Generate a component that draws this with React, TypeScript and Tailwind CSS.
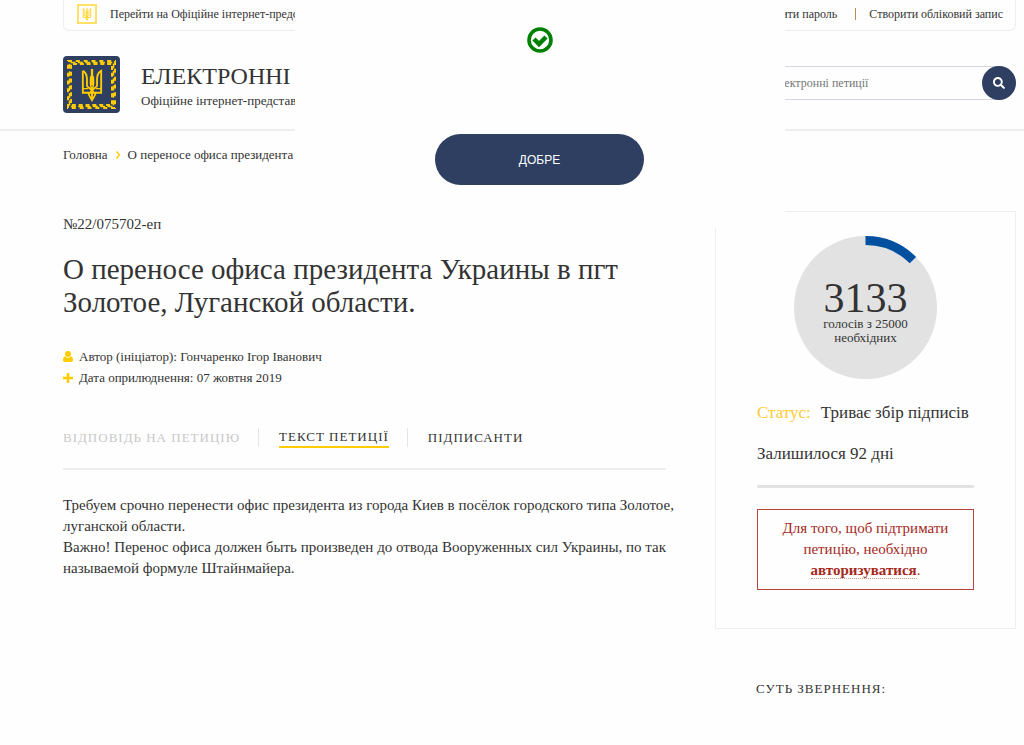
import { FaSearch } from "react-icons/fa"

function Trident({ className }: { className?: string }) {
  return (
    <svg viewBox="0 0 24 38" className={className} fill="none" stroke="currentColor" strokeWidth="2" aria-hidden="true">
      <path d="M2 4V28H22V4C18.500 6 17.500 9 17.500 13V20C17.500 22 15 22 13.500 24L9 29" />
      <path d="M2 4C5.500 6 6.500 9 6.500 13V20C6.500 22 9 22 10.500 24L15 29" />
      <path d="M12 2V20" strokeWidth="2.500" />
      <path d="M10.500 10C10.500 15 9 19 12 25C15 19 13.500 15 13.500 10M2 23.500H8M16 23.500H22" strokeWidth="1.500" />
      <path d="M8 28C8.500 32 10.500 33 12 36C13.500 33 15.500 32 16 28M12 25V34" />
    </svg>
  )
}

function Emblem() {
  return (
    <span className="relative grid h-[57px] w-[57px] shrink-0 place-items-center rounded bg-[#2f3f61] text-[#fc0]">
      <svg viewBox="0 0 57 57" className="absolute inset-0" fill="none" stroke="currentColor" aria-hidden="true">
        <rect x="5" y="5" width="47" height="47" strokeWidth="2" strokeDasharray="4 3.833" />
        <rect x="6.500" y="6.500" width="44" height="44" strokeWidth="1.500" strokeDasharray="5 2.333" strokeDashoffset="-1" />
        <rect x="8" y="8" width="41" height="41" strokeWidth="2" strokeDasharray="4 2.833" strokeDashoffset="-2" />
      </svg>
      <Trident className="h-[35px] w-[22px]" />
    </span>
  )
}

function TopBar() {
  return (
    <div className="flex h-[31px] items-center justify-between rounded-b-md border border-t-0 border-[#eee] pr-3 pb-[2px] pl-[13px] text-[12px]">
      <a href="#" className="flex items-center gap-[13px] whitespace-nowrap">
        <span className="grid h-5 w-5 place-items-center border-2 border-[#ffe066] text-[#fc0]">
          <Trident className="h-[14px] w-[10px]" />
        </span>
        Перейти на Офіційне інтернет-представництво
      </a>
      <div className="flex items-center whitespace-nowrap">
        <a href="#">Відновити пароль</a>
        <span className="mr-[13px] ml-[18px] h-3 w-px bg-[#b98a5a]" />
        <a href="#">Створити обліковий запис</a>
      </div>
    </div>
  )
}

function SearchForm() {
  return (
    <form className="flex h-[34px] w-[300px] items-center rounded-full border border-[#d5d6e0]">
      <input
        type="search"
        aria-label="Пошук"
        placeholder="Електронні петиції"
        className="h-full min-w-0 flex-1 bg-transparent pl-[54px] text-[12px] outline-none placeholder:text-[#777]"
      />
      <button
        type="button"
        aria-label="Шукати"
        className="-mr-px grid h-[34px] w-[34px] shrink-0 place-items-center rounded-full bg-[#2f3f61] text-white"
      >
        <FaSearch size={12} />
      </button>
    </form>
  )
}

function Dialog() {
  return (
    <div
      role="dialog"
      aria-label="Повідомлення"
      className="absolute top-0 left-1/2 flex h-[228px] w-[490px] -translate-x-1/2 flex-col items-center bg-[#fefefe] pt-[27px]"
    >
      <svg viewBox="0 0 26 26" className="h-[26px] w-[26px]" fill="none" stroke="#008000" aria-hidden="true">
        <circle cx="13" cy="13" r="11" strokeWidth="3.600" />
        <path d="M7 12L12 17L19 10" strokeWidth="4.500" />
      </svg>
      <button
        type="button"
        className="mt-[81px] h-[51px] w-[209px] rounded-full bg-[#2f3f61] font-['Liberation_Sans',sans-serif] text-[12px] text-white"
      >
        ДОБРЕ
      </button>
    </div>
  )
}

function VoteCounter() {
  return (
    <div className="relative mx-auto h-[143px] w-[143px]">
      <svg viewBox="0 0 143 143" className="absolute inset-0" aria-hidden="true">
        <circle cx="71.500" cy="71.500" r="71.500" fill="#e2e2e2" />
        <path d="M71.500 4.500A67 67 0 0 1 118.900 24.100" fill="none" stroke="#00509f" strokeWidth="9" />
      </svg>
      <div className="relative pt-[43px] text-center text-[13px] leading-[14px]">
        <div className="text-[42px] leading-[38px]">3133</div>
        голосів з 25000
        <br />
        необхідних
      </div>
    </div>
  )
}

function PetitionMeta() {
  return (
    <ul className="pt-[27px] text-[13px] leading-[21px]">
      <li className="flex items-center gap-[6px]">
        <svg viewBox="0 0 10 11" className="h-[11px] w-[10px]" fill="#fc0" aria-hidden="true">
          <circle cx="5" cy="3" r="3" />
          <path d="M2.200 5.200C3.500 7.200 6.500 7.200 7.800 5.200C9.500 5.700 10 7.300 10 9C10 10.200 9.300 11 8.200 11H1.800C0.700 11 0 10.200 0 9C0 7.300 0.500 5.700 2.200 5.200Z" />
        </svg>
        Автор (ініціатор): Гончаренко Ігор Іванович
      </li>
      <li className="flex items-center gap-[6px]">
        <svg viewBox="0 0 10 10" className="h-[10px] w-[10px]" stroke="#fc0" strokeWidth="2.500" aria-hidden="true">
          <path d="M5 0V10M0 5H10" />
        </svg>
        Дата оприлюднення: 07 жовтня 2019
      </li>
    </ul>
  )
}

function Tabs() {
  return (
    <nav className="flex items-center border-b-2 border-[#eee] pb-[20px] text-[13px] leading-[19px] tracking-[1px] whitespace-nowrap">
      <button type="button" disabled className="tracking-[1px] text-[#c8c8c8] uppercase">
        Відповідь на петицію
      </button>
      <span className="mr-[20px] ml-[18px] h-[19px] w-px bg-[#e5e5e5]" />
      <button type="button" className="border-b-2 border-[#fc0] tracking-[1px] uppercase">
        Текст петиції
      </button>
      <span className="mr-[20px] ml-[18px] h-[19px] w-px bg-[#e5e5e5]" />
      <button type="button" className="tracking-[1px] uppercase">
        Підписанти
      </button>
    </nav>
  )
}

export default function App() {
  return (
    <div className="min-h-screen overflow-hidden bg-[#fefefe] pb-10 font-['Liberation_Serif',serif] text-[#333]">
      <header className="border-b-2 border-[#eee] pr-2 pl-[63px]">
        <div className="relative z-10">
          <TopBar />
          <div className="flex items-center justify-between pt-[25px] pb-4">
            <a href="#" className="flex items-center gap-[21px] whitespace-nowrap">
              <Emblem />
              <span className="block">
                <span className="block text-[24px] leading-[32px]">ЕЛЕКТРОННІ</span>
                <span className="block text-[13px] leading-[18px]">Офіційне інтернет-представництво</span>
              </span>
            </a>
            <div className="pb-[3px]">
              <SearchForm />
            </div>
          </div>
          <Dialog />
        </div>
      </header>

      <div className="pr-2 pl-[63px]">
        <nav aria-label="breadcrumb" className="flex items-center gap-2 pt-[15px] text-[13px] leading-[18px]">
          <a href="#">Головна</a>
          <svg viewBox="0 0 4 8" className="h-2 w-1" fill="none" stroke="#fc0" strokeWidth="1.500" aria-hidden="true">
            <path d="M0.500 0.500L3.500 4L0.500 7.500" />
          </svg>
          <span>О переносе офиса президента Украины</span>
        </nav>

        <div className="grid grid-cols-[minmax(0,1fr)_301px] gap-[49px] pt-[47px]">
          <main>
            <p className="pt-[3px] text-[15px] leading-[20px]">№22/075702-еп</p>
            <h1 className="pt-[19px] text-[29px] leading-[33px]">
              О переносе офиса президента Украины в пгт Золотое, Луганской области.
            </h1>
            <PetitionMeta />
            <div className="pt-[39px]">
              <Tabs />
            </div>
            <p className="-mr-4 pt-[25px] text-[15px] leading-[21px]">
              Требуем срочно перенести офис президента из города Киев в посёлок городского типа Золотое, луганской
              области.
              <br />
              Важно! Перенос офиса должен быть произведен до отвода Вооруженных сил Украины, по так называемой формуле
              Штайнмайера.
            </p>
          </main>

          <aside>
            <section className="border border-[#eee] px-[41px] pt-[24px] pb-[38px]">
              <VoteCounter />
              <p className="flex gap-[10px] pt-[24px] text-[17px] leading-[20px] whitespace-nowrap">
                <span className="text-[#fc3]">Статус:</span>
                <span>Триває збір підписів</span>
              </p>
              <p className="pt-[21px] text-[17px] leading-[20px]">Залишилося 92 дні</p>
              <div className="mt-[21px] h-[3px] rounded bg-[#e2e2e2]" />
              <p className="mt-[21px] border border-[#b4453c] px-2 py-2 text-center text-[15px] leading-[21px] text-[#a5281b]">
                Для того, щоб підтримати петицію, необхідно{" "}
                <a href="#" className="border-b border-dotted border-[#cc9988] font-bold">
                  авторизуватися
                </a>
                .
              </p>
            </section>
            <h2 className="pt-[50px] pl-[41px] text-[13px] leading-[20px] tracking-[1px]">СУТЬ ЗВЕРНЕННЯ:</h2>
          </aside>
        </div>
      </div>
    </div>
  )
}
